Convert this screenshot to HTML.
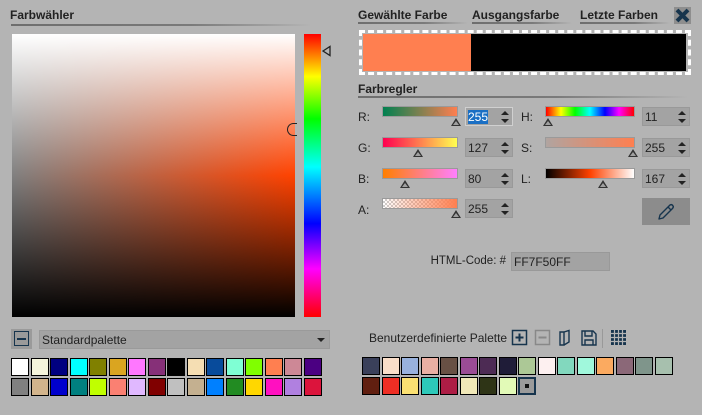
<!DOCTYPE html>
<html><head><meta charset="utf-8"><style>
*{box-sizing:border-box;margin:0;padding:0}
body{width:702px;height:415px;background:#b4b4b4;font-family:"Liberation Sans",sans-serif;font-size:11px;color:#222;position:relative;overflow:hidden}
.a{position:absolute}
.h{font-weight:bold;font-size:12px;color:#222}
.ul{position:absolute;height:2px;background:linear-gradient(to right,#6e6e6e,#7a7a7a 60%,rgba(140,140,140,0))}
.bar{position:absolute;height:11px;border:1px solid #9a9a9a}
.tri{position:absolute;width:0;height:0;border-left:5px solid transparent;border-right:5px solid transparent;border-bottom:8px solid #333}
.tri::after{content:"";position:absolute;left:-3px;top:3px;border-left:3px solid transparent;border-right:3px solid transparent;border-bottom:4px solid #a0a0a0}
.inp{position:absolute;width:48px;height:19px;background:#a3a3a3;border:1px solid #999;font-size:12px;padding:2px 0 0 2px}
.spin{position:absolute;right:3px;top:3px;width:8px}
.spin::before{content:"";position:absolute;top:0;left:0;border-left:4px solid transparent;border-right:4px solid transparent;border-bottom:4px solid #222}
.spin::after{content:"";position:absolute;top:8px;left:0;border-left:4px solid transparent;border-right:4px solid transparent;border-top:4px solid #222}
.lbl{position:absolute;font-size:12px}
.grid{position:absolute;display:grid;grid-template-columns:repeat(16,19.5px);grid-auto-rows:19.5px}
.grid div{width:18px;height:18px;border:1px solid #000}
</style></head><body>

<div class="a h" style="left:10px;top:8px">Farbwähler</div>
<div class="ul" style="left:11px;top:24px;width:300px"></div>

<div class="a" style="left:12px;top:34px;width:283px;height:283px;background:linear-gradient(to bottom,#fff,rgba(255,255,255,0) 50%,rgba(0,0,0,0) 50%,#000),linear-gradient(to right,#808080,#ff4200)"></div>
<div class="a" style="left:287px;top:123px;width:10px;height:13px;border:1.5px solid #222;border-right:none;border-radius:7px 0 0 7px"></div>
<div class="a" style="left:304px;top:34px;width:17px;height:283px;background:linear-gradient(to bottom,#f00,#ff0 15%,#0f0 30%,#0ff 47%,#00f 67%,#f0f 83%,#f00)"></div>
<svg class="a" style="left:322px;top:45px" width="10" height="12"><path d="M1 6 L8 1.5 L8 10.5 Z" fill="none" stroke="#222" stroke-width="1.3"/></svg>

<div class="a h" style="left:358px;top:8px">Gewählte Farbe</div>
<div class="ul" style="left:358px;top:22px;width:110px"></div>
<div class="a h" style="left:472px;top:8px">Ausgangsfarbe</div>
<div class="ul" style="left:472px;top:22px;width:100px"></div>
<div class="a h" style="left:580px;top:8px">Letzte Farben</div>
<div class="ul" style="left:580px;top:22px;width:90px"></div>
<div class="a" style="left:674px;top:7px;width:17px;height:17px;background:#8e8e8e"></div>
<svg class="a" style="left:674px;top:7px" width="17" height="17"><path d="M3 3 L14 14 M14 3 L3 14" stroke="#16344d" stroke-width="4"/></svg>

<div class="a" style="left:359px;top:30px;width:332px;height:45px;border:3px dashed #fff;background:#b4b4b4"></div>
<div class="a" style="left:363px;top:34px;width:108px;height:37px;background:#ff7f50"></div>
<div class="a" style="left:471px;top:34px;width:215px;height:37px;background:#000"></div>

<div class="a h" style="left:358px;top:82px">Farbregler</div>
<div class="ul" style="left:358px;top:96px;width:330px"></div>

<div class="lbl" style="left:358px;top:110px">R:</div>
<div class="bar" style="left:382px;top:106px;width:76px;background:linear-gradient(to right,#008050,#ff7f50)"></div>
<div class="tri" style="left:451px;top:118px"></div>
<div class="inp" style="left:465px;top:107px;border-color:#d0d0d0"><span style="background:#1a6fc4;color:#fff">255</span><div class="spin"></div></div>

<div class="lbl" style="left:358px;top:141px">G:</div>
<div class="bar" style="left:382px;top:137px;width:76px;background:linear-gradient(to right,#ff0050,#ffff50)"></div>
<div class="tri" style="left:413px;top:149px"></div>
<div class="inp" style="left:465px;top:138px">127<div class="spin"></div></div>

<div class="lbl" style="left:358px;top:172px">B:</div>
<div class="bar" style="left:382px;top:168px;width:76px;background:linear-gradient(to right,#ff7f00,#ff7fff)"></div>
<div class="tri" style="left:400px;top:180px"></div>
<div class="inp" style="left:465px;top:169px">80<div class="spin"></div></div>

<div class="lbl" style="left:358px;top:203px">A:</div>
<div class="bar" style="left:382px;top:198px;width:76px;background:linear-gradient(to right,rgba(255,127,80,0),#ff7f50),repeating-conic-gradient(#ccc 0 25%,#fff 0 50%) 0 0/4px 4px"></div>
<div class="tri" style="left:451px;top:210px"></div>
<div class="inp" style="left:465px;top:199px">255<div class="spin"></div></div>

<div class="lbl" style="left:521px;top:110px">H:</div>
<div class="bar" style="left:545px;top:106px;width:90px;background:linear-gradient(to right,#f00,#ff0 17%,#0f0 33%,#0ff 50%,#00f 67%,#f0f 83%,#f00)"></div>
<div class="tri" style="left:543px;top:118px"></div>
<div class="inp" style="left:642px;top:107px">11<div class="spin"></div></div>

<div class="lbl" style="left:521px;top:141px">S:</div>
<div class="bar" style="left:545px;top:137px;width:90px;background:linear-gradient(to right,#b0a4a0,#ff7f50)"></div>
<div class="tri" style="left:628px;top:149px"></div>
<div class="inp" style="left:642px;top:138px">255<div class="spin"></div></div>

<div class="lbl" style="left:521px;top:172px">L:</div>
<div class="bar" style="left:545px;top:168px;width:90px;background:linear-gradient(to right,#000,#ff4200 50%,#fff)"></div>
<div class="tri" style="left:598px;top:180px"></div>
<div class="inp" style="left:642px;top:169px">167<div class="spin"></div></div>

<div class="a" style="left:642px;top:198px;width:48px;height:27px;background:#8c8c8c"></div>
<svg class="a" style="left:656px;top:202px" width="20" height="20"><path d="M3 17 L4 13 L12 5 L15 8 L7 16 Z M12 5 L14 3 Q16 2 17 4 Q18 5 16 7 L15 8" fill="none" stroke="#16344d" stroke-width="1.4" stroke-linejoin="round"/></svg>

<div class="lbl" style="right:196px;top:255px;font-size:11.5px;text-align:right;white-space:nowrap">HTML-Code: #</div>
<div class="a" style="left:511px;top:252px;width:99px;height:19px;background:#a3a3a3;border:1px solid #999;font-size:12px;padding:2px 0 0 2px">FF7F50FF</div>

<div class="a" style="left:11px;top:329px;width:21px;height:20px;background:#9a9a9a"></div>
<div class="a" style="left:14px;top:331px;width:15px;height:15px;border:1.5px solid #16344d"></div>
<div class="a" style="left:17px;top:338px;width:9px;height:2px;background:#16344d"></div>
<div class="a" style="left:39px;top:330px;width:291px;height:19px;background:#a3a3a3;border:1px solid #9a9a9a;font-size:12px;padding:2px 0 0 2px">Standardpalette</div>
<div class="a" style="left:317px;top:338px;border-left:4px solid transparent;border-right:4px solid transparent;border-top:4px solid #222"></div>

<div class="grid" style="left:11px;top:358px">
<div style="background:#fff"></div><div style="background:#f5f5dc"></div><div style="background:#000080"></div><div style="background:#0ff"></div><div style="background:#808000"></div><div style="background:#daa520"></div><div style="background:#ff77ff"></div><div style="background:#863078"></div><div style="background:#000"></div><div style="background:#f5deb3"></div><div style="background:#084b9b"></div><div style="background:#7fffd4"></div><div style="background:#80ff00"></div><div style="background:#ff7f50"></div><div style="background:#cd8896"></div><div style="background:#4b0082"></div>
<div style="background:#808080"></div><div style="background:#d2b48c"></div><div style="background:#0000cd"></div><div style="background:#008080"></div><div style="background:#c0ff00"></div><div style="background:#fa8072"></div><div style="background:#e0b8ff"></div><div style="background:#800000"></div><div style="background:#c0c0c0"></div><div style="background:#c4b090"></div><div style="background:#0080ff"></div><div style="background:#228b22"></div><div style="background:#ffd700"></div><div style="background:#ff10c0"></div><div style="background:#b080e0"></div><div style="background:#dc143c"></div>
</div>

<div class="lbl" style="left:369px;top:331px">Benutzerdefinierte Palette</div>
<svg class="a" style="left:511px;top:329px" width="120" height="20">
<rect x="1.5" y="1.5" width="14" height="14" fill="none" stroke="#16344d" stroke-width="1.5"/><path d="M8.5 4.5 V12.5 M4.5 8.5 H12.5" stroke="#16344d" stroke-width="2"/>
<rect x="24.5" y="1.5" width="14" height="14" fill="none" stroke="#888" stroke-width="1.5"/><path d="M27.5 8.5 H35.5" stroke="#888" stroke-width="2"/>
<path d="M49 3 L53 3 L53 16 L49 16 Z M53 3 L58 1.5 L58 13 L53 16" fill="none" stroke="#16344d" stroke-width="1.4"/>
<path d="M71 2 H82 L85 5 V16 H71 Z M74 2 V7 H81 V2 M74 16 V11 H82 V16" fill="none" stroke="#16344d" stroke-width="1.4"/>
<path d="M91.5 0 V19" stroke="#999"/>
<rect x="100" y="1" width="15" height="15" fill="#16344d"/><path d="M100 4.5 H115 M100 8.5 H115 M100 12.5 H115 M103.5 1 V16 M107.5 1 V16 M111.5 1 V16" stroke="#b4b4b4" stroke-width="1.2"/>
</svg>

<div class="grid" style="left:362px;top:357px">
<div style="background:#3a405a"></div><div style="background:#f9dec9"></div><div style="background:#99b2dd"></div><div style="background:#e9afa3"></div><div style="background:#685044"></div><div style="background:#9a4c95"></div><div style="background:#4d2b54"></div><div style="background:#1f1c38"></div><div style="background:#acc896"></div><div style="background:#fdf0f0"></div><div style="background:#82d8be"></div><div style="background:#a0f8dc"></div><div style="background:#fbaa60"></div><div style="background:#8b6878"></div><div style="background:#7f958b"></div><div style="background:#a7c0ae"></div>
<div style="background:#611f10"></div><div style="background:#ee2e24"></div><div style="background:#fbe072"></div><div style="background:#2dc8b9"></div><div style="background:#ad1d45"></div><div style="background:#f0e8b8"></div><div style="background:#2e3416"></div><div style="background:#e2fab7"></div><div style="background:#9a9a9a;border:2px solid #16344d;position:relative"><span style="position:absolute;left:5px;top:5px;width:4px;height:4px;background:#111"></span></div>
</div>

</body></html>
